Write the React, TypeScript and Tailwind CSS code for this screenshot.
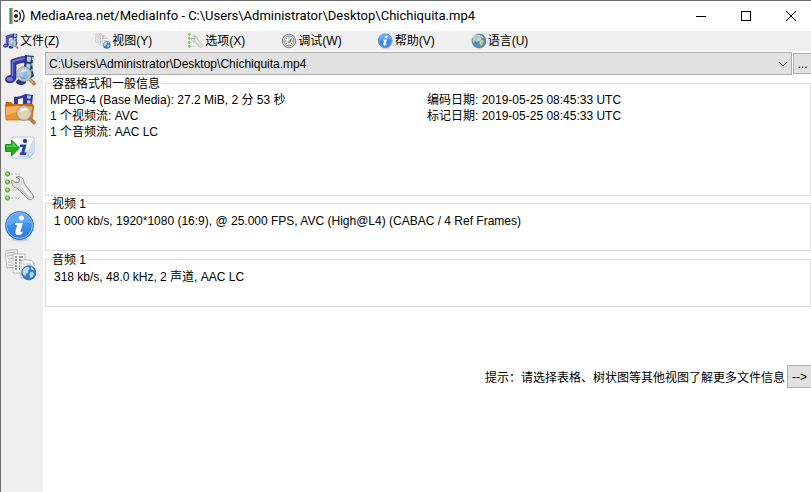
import type { ReactNode } from "react";

interface IconProps {
  className?: string;
}

const Icon = ({ className, children }: { className?: string; children: ReactNode }) => (
  <svg viewBox="0 0 32 32" className={className} aria-hidden="true">
    {children}
  </svg>
);

const Lens = () => (
  <>
    <path d="M24.500 25l4.500 4.500" stroke="#b57a48" strokeWidth="3.600" strokeLinecap="round" />
    <path d="M24 24.500l4 4" stroke="#eab07c" strokeWidth="1.500" />
    <circle cx="19" cy="20" r="6.500" fill="#9cc4e6" fillOpacity="0.900" stroke="#c3c6ca" strokeWidth="1.800" />
    <circle cx="19" cy="20" r="7.400" fill="none" stroke="#7b818b" strokeWidth="0.500" />
    <path d="M14.500 22c1 3 5 4 7 2-3 0-5-1-7-2z" fill="#4b80bb" fillOpacity="0.600" />
    <path d="M15 19c1-4 5-5 8-2-3 0-5 1-8 2z" fill="#eef7ff" fillOpacity="0.800" />
  </>
);

const FileIcon = ({ className }: IconProps) => (
  <Icon className={className}>
    <path d="M20 1l9 1c-2 7-2 12 0 20l-7 5-4-2z" fill="#263d67" />
    <path d="M22 2.500l4.500.500-1 5-4-.500zM21.500 9.500l4 .4-.3 4.600-4-.3zM21.500 16l4 .3.500 5-4 .3z" fill="#a9cfed" />
    <path d="M27.500 3l1 .2-.5 3-1-.2zM26.500 9h1v2.500h-1zM26.500 15h1v2.500h-1z" fill="#edf6ff" />
    <path d="M6 6c5-2 9-3 15-4v6c-4 .5-7 1-10 2.500V24c0 5-9 6.500-10.500 2.500-.5-3 2-5 5.500-5z" fill="#3939ad" stroke="#20206e" strokeWidth="0.700" />
    <path d="M7.500 7.500c4-1.500 8-2 12-3.500M7.500 8v14" fill="none" stroke="#8080e8" strokeWidth="1.400" />
    <ellipse cx="4.800" cy="25" rx="3" ry="2" fill="#7878e0" />
    <ellipse cx="16" cy="28" rx="5" ry="3" fill="#293d75" />
    <Lens />
  </Icon>
);

const FolderIcon = ({ className }: IconProps) => (
  <Icon className={className}>
    <path d="M9 10V4c4 0 8-1 11-3l8 1-1 10H9z" fill="#35359f" />
    <path d="M13 6l5-1v6h-5z" fill="#efefef" />
    <path d="M22 2.500l4 .3-.5 3-3.500-.3zM22 7.500h3.500v3H22z" fill="#a9cfed" />
    <path d="M0 12l1-3h5l2 2h20l1 3-2 13H2z" fill="#c96a12" />
    <path d="M0 13c9-1 19-1 28 0l-1 14H1z" fill="#ef9232" stroke="#b9610e" strokeWidth="0.700" />
    <path d="M1 14c8-1 17-1 26 0v4c-8-1-17 1-26 4z" fill="#fab263" />
    <path d="M24.500 25l4.500 4.500" stroke="#b57a48" strokeWidth="3.600" strokeLinecap="round" />
    <circle cx="19" cy="20" r="6.500" fill="#dfd5b4" stroke="#cac8c2" strokeWidth="1.800" />
    <circle cx="19" cy="20" r="7.400" fill="none" stroke="#77716a" strokeWidth="0.500" />
    <path d="M15 19c1-4 5-5 8-2-3 0-5 1-8 2z" fill="#fffbe9" />
  </Icon>
);

const ExportIcon = ({ className }: IconProps) => (
  <Icon className={className}>
    <path d="M7 5h22v16l-5 5H7z" fill="#fcfdff" stroke="#aab6d4" strokeWidth="0.800" />
    <path d="M8 25c9 0 15-5 20-17v13l-4 4z" fill="#cedcf3" />
    <path d="M23 26l1-5h5z" fill="#eef3fc" stroke="#aab6d4" strokeWidth="0.600" />
    <circle cx="20" cy="9" r="2.200" fill="#2543a0" />
    <path d="M15 12.500h6.500l-2 8h2l-.5 2.500h-6.500l.5-2.500h1.300l1.300-5.500h-3z" fill="#2543a0" />
    <path d="M.500 12.500h6V8l8 8-8 8v-4.500h-6z" fill="#23ad1e" stroke="#128313" strokeWidth="0.900" />
    <path d="M1.500 13.500h6V10l4.500 5H1.500z" fill="#5cca45" />
  </Icon>
);

const OptionsIcon = ({ className }: IconProps) => (
  <Icon className={className}>
    <path d="M6 3h9M6 11h9M6 19h9M6 27h9" stroke="#c6c6c6" strokeWidth="1.200" strokeDasharray="2.500 1" />
    <g fill="#75bd43" stroke="#4a9323" strokeWidth="0.600">
      <circle cx="2.500" cy="3" r="2.200" />
      <circle cx="2.500" cy="11" r="2.200" />
      <circle cx="2.500" cy="19" r="2.200" />
      <circle cx="2.500" cy="27" r="2.200" />
    </g>
    <g fill="#c7efa0">
      <circle cx="2.200" cy="2.500" r="0.900" />
      <circle cx="2.200" cy="10.500" r="0.900" />
      <circle cx="2.200" cy="18.500" r="0.900" />
      <circle cx="2.200" cy="26.500" r="0.900" />
    </g>
    <path d="M7 9l4 3 3-1 .500-3-3.500-2c4-1.500 8 1 8 6l9 12c2 3-2 6-5 4L12.500 17.500C8 17 6 13 7 9z" fill="#dedede" stroke="#8d8d8d" strokeWidth="0.900" />
    <path d="M16 14l10.500 12" stroke="#fafafa" strokeWidth="1.800" />
    <path d="M13 16.500l11 10" stroke="#b5b5b5" strokeWidth="1" />
  </Icon>
);

const InfoIcon = ({ className }: IconProps) => (
  <Icon className={className}>
    <defs>
      <linearGradient id="infoFill" x1="0" y1="0" x2="0" y2="1">
        <stop offset="0" stopColor="#4d9cf0" />
        <stop offset="1" stopColor="#2d7de2" />
      </linearGradient>
    </defs>
    <ellipse cx="15" cy="30" rx="9" ry="1.500" fill="#cccccc" />
    <circle cx="14.500" cy="15.500" r="14" fill="url(#infoFill)" stroke="#2565bd" strokeWidth="0.900" />
    <circle cx="14.500" cy="15.500" r="12.900" fill="none" stroke="#8abff8" strokeWidth="1" />
    <path d="M2.500 16C2 8 7 3 14.500 3S27 8 26.500 13C19 12 9 12 2.500 16z" fill="#78b5f7" fillOpacity="0.600" />
    <circle cx="16.500" cy="8" r="2.500" fill="#ffffff" />
    <path d="M10.500 13h7.500l-2.500 8c-.3 1.500 1 1.500 2.500.500-1 3-3.500 4-5.500 3.500s-2.500-2-2-4l1.700-6H10z" fill="#ffffff" />
  </Icon>
);

const globeLand = "M3 7c2-3 4-4 6-4l2 2-2 2 1 2-3 2-1 3-3-3zM11 10l3-1 2 2-2 4-2 1-1-3zM13 3l3 3-2 1-2-2z";

const ViewIcon = ({ className }: IconProps) => (
  <Icon className={className}>
    <g stroke="#a8a8a8" strokeWidth="0.800">
      <path d="M0 2l12-2 1 18-11 1z" fill="#f1f1f1" />
      <path d="M8 5h12v19H8z" fill="#f8f8f8" />
      <path d="M16 11h10l3 3v15H16z" fill="#fafafa" />
    </g>
    <path d="M2 4l8-1M2 7l6-1M3 10l5-1M3 13h4M3 16h4M18 15h8M18 18h7M18 21h4M18 24h3M18 27h3" stroke="#b4b4b4" strokeWidth="1" />
    <path d="M10 8h2M10 11h2M10 14h2M10 17h2M10 20h2M14 8h4M14 11h2M14 14h1M14 17h1M14 20h1" stroke="#777777" strokeWidth="1.400" />
    <g transform="translate(15 15) scale(.88)">
      <circle cx="10" cy="10" r="8" fill="#367fc7" stroke="#1b5796" strokeWidth="0.900" />
      <path d={globeLand} fill="#b6dcf5" />
    </g>
  </Icon>
);

const DebugIcon = ({ className }: IconProps) => (
  <Icon className={className}>
    <circle cx="16" cy="16" r="13.500" fill="#d7d7d7" stroke="#888888" strokeWidth="2" />
    <circle cx="16" cy="16" r="10" fill="#f0f0f0" stroke="#9b9b9b" strokeWidth="2" />
    <path d="M16 7v4M16 21v4M7 16h4M21 16h4M10 10l2 2M10 22l2-2M22 22l-2-2" stroke="#787878" strokeWidth="1.600" />
    <path d="M13 19l9-9-4 10z" fill="#484848" />
    <circle cx="16" cy="18" r="2.500" fill="#d6a16d" />
  </Icon>
);

const GlobeIcon = ({ className }: IconProps) => (
  <Icon className={className}>
    <circle cx="16" cy="16" r="14" fill="#5089bd" stroke="#5a7fa8" strokeWidth="1.500" />
    <ellipse cx="12" cy="10" rx="9" ry="7" fill="#b9d6ec" />
    <path d="M4 12c2-4 5-6 8-6l3 2-4 3 1 3-5 2-1 4-3-3zM17 15l5-2 4 3-3 7-4 3-2-5zM20 4l6 5-3 2-4-4z" fill="#c3cf91" stroke="#8fa67c" strokeWidth="0.700" />
  </Icon>
);

const AppLogo = () => (
  <svg viewBox="0 0 18 18" className="size-[18px]" fill="none" aria-hidden="true">
    <path d="M1.500 1v16" stroke="#1b8e49" strokeWidth="2" />
    <path d="M3 1v16" stroke="#c83b3b" strokeWidth="1" />
    <circle cx="7" cy="9" r="2" fill="#222222" />
    <path d="M5 4.500c1.500-1 3-.8 4 .3M5 13.500c1.500 1 3 .8 4-.3M10 5c2 2 2 6 0 8M12.500 3c3.500 3 3.500 9 0 12" stroke="#2d2d2d" strokeWidth="1.400" />
  </svg>
);

const menus = [
  { label: "文件(Z)", icon: FileIcon },
  { label: "视图(Y)", icon: ViewIcon },
  { label: "选项(X)", icon: OptionsIcon },
  { label: "调试(W)", icon: DebugIcon },
  { label: "帮助(V)", icon: InfoIcon },
  { label: "语言(U)", icon: GlobeIcon },
];

const tools = [
  { label: "打开文件", icon: FileIcon },
  { label: "打开文件夹", icon: FolderIcon },
  { label: "导出", icon: ExportIcon },
  { label: "选项", icon: OptionsIcon },
  { label: "关于", icon: InfoIcon },
  { label: "视图", icon: ViewIcon },
];

const path = "C:\\Users\\Administrator\\Desktop\\Chichiquita.mp4";

const Group = ({ title, className, children }: { title: string; className: string; children: ReactNode }) => (
  <fieldset className={`min-w-0 border border-[#dcdcdc] ${className}`}>
    <legend className="ml-1.5 pt-0.5 pr-px leading-3">{title}</legend>
    {children}
  </fieldset>
);

const TitleBar = () => (
  <header className="flex h-[30px] items-center bg-white pl-2">
    <AppLogo />
    <h1 className="ml-[3px] flex-1 truncate font-['Roboto','Noto_Sans_CJK_SC',sans-serif] text-[13px]">
      MediaArea.net/MediaInfo - {path}
    </h1>
    <div className="flex h-full gap-[5px]">
      <button aria-label="最小化" className="flex w-10 items-center justify-center">
        <svg viewBox="0 0 10 10" className="size-2.5" stroke="black" shapeRendering="crispEdges">
          <path d="M0 5.500h10" />
        </svg>
      </button>
      <button aria-label="最大化" className="flex w-10 items-center justify-center">
        <svg viewBox="0 0 10 10" className="size-2.5" stroke="black" fill="none" shapeRendering="crispEdges">
          <path d="M.500.500h9v9h-9z" />
        </svg>
      </button>
      <button aria-label="关闭" className="flex w-10 items-center justify-center">
        <svg viewBox="0 0 10 10" className="size-2.5" stroke="black">
          <path d="M0 0l10 10M10 0L0 10" />
        </svg>
      </button>
    </div>
  </header>
);

export default function App() {
  return (
    <div className="flex min-h-screen flex-col border-t border-l border-[#6b6b6b] bg-white font-['Liberation_Sans','Noto_Sans_CJK_SC',sans-serif] text-[12px] leading-4 text-black">
      <TitleBar />
      <nav className="flex h-5 items-center gap-9 bg-[#efefef] pl-0.5">
        {menus.map(({ label, icon: MenuIcon }) => (
          <button key={label} className="flex shrink-0 items-center gap-px">
            <MenuIcon className="size-4" />
            {label}
          </button>
        ))}
      </nav>
      <div className="flex flex-1">
        <aside className="flex w-[42px] shrink-0 flex-col gap-[7px] bg-[#efefef] pt-[3px] pl-1">
          {tools.map(({ label, icon: ToolIcon }) => (
            <button key={label} aria-label={label} className="size-8">
              <ToolIcon className="size-8" />
            </button>
          ))}
        </aside>
        <main className="flex min-w-0 flex-1 flex-col pt-px pl-0.5">
          <div className="flex items-center gap-px">
            <div className="grid flex-1 items-center">
              <select
                aria-label="文件"
                className="col-start-1 row-start-1 h-[23px] w-full appearance-none border border-[#adadad] bg-[#e1e1e1] pl-[3px]"
              >
                <option>{path}</option>
              </select>
              <svg viewBox="0 0 10 6" className="pointer-events-none col-start-1 row-start-1 mr-1 h-1.5 w-2.5 justify-self-end" fill="none" stroke="#555555">
                <path d="M1 1l4 4 4-4" />
              </svg>
            </div>
            <button aria-label="浏览" className="h-[21px] w-[18px] border border-r-0 border-[#adadad] bg-[#e1e1e1]">
              ...
            </button>
          </div>
          <div className="mt-px flex flex-col">
            <Group title="容器格式和一般信息" className="h-[120px]">
              <div className="grid grid-cols-2 pt-0.5 pr-1.5 pl-1">
                <div>
                  <p>MPEG-4 (Base Media): 27.2 MiB, 2 分 53 秒</p>
                  <p>1 个视频流: AVC</p>
                  <p>1 个音频流: AAC LC</p>
                </div>
                <div>
                  <p>编码日期: 2019-05-25 08:45:33 UTC</p>
                  <p>标记日期: 2019-05-25 08:45:33 UTC</p>
                </div>
              </div>
            </Group>
            <Group title="视频 1" className="mb-px h-[55px]">
              <p className="pt-[3px] pl-2">1 000 kb/s, 1920*1080 (16:9), @ 25.000 FPS, AVC (High@L4) (CABAC / 4 Ref Frames)</p>
            </Group>
            <Group title="音频 1" className="h-[55px]">
              <p className="pt-[3px] pl-2">318 kb/s, 48.0 kHz, 2 声道, AAC LC</p>
            </Group>
          </div>
          <div className="mt-[58px] flex items-end justify-end gap-0.5">
            <p className="pb-0.5">提示：请选择表格、树状图等其他视图了解更多文件信息</p>
            <button aria-label="下一视图" className="h-[23px] w-6 border border-r-0 border-[#adadad] bg-[#e1e1e1]">
              --&gt;
            </button>
          </div>
        </main>
      </div>
    </div>
  );
}
